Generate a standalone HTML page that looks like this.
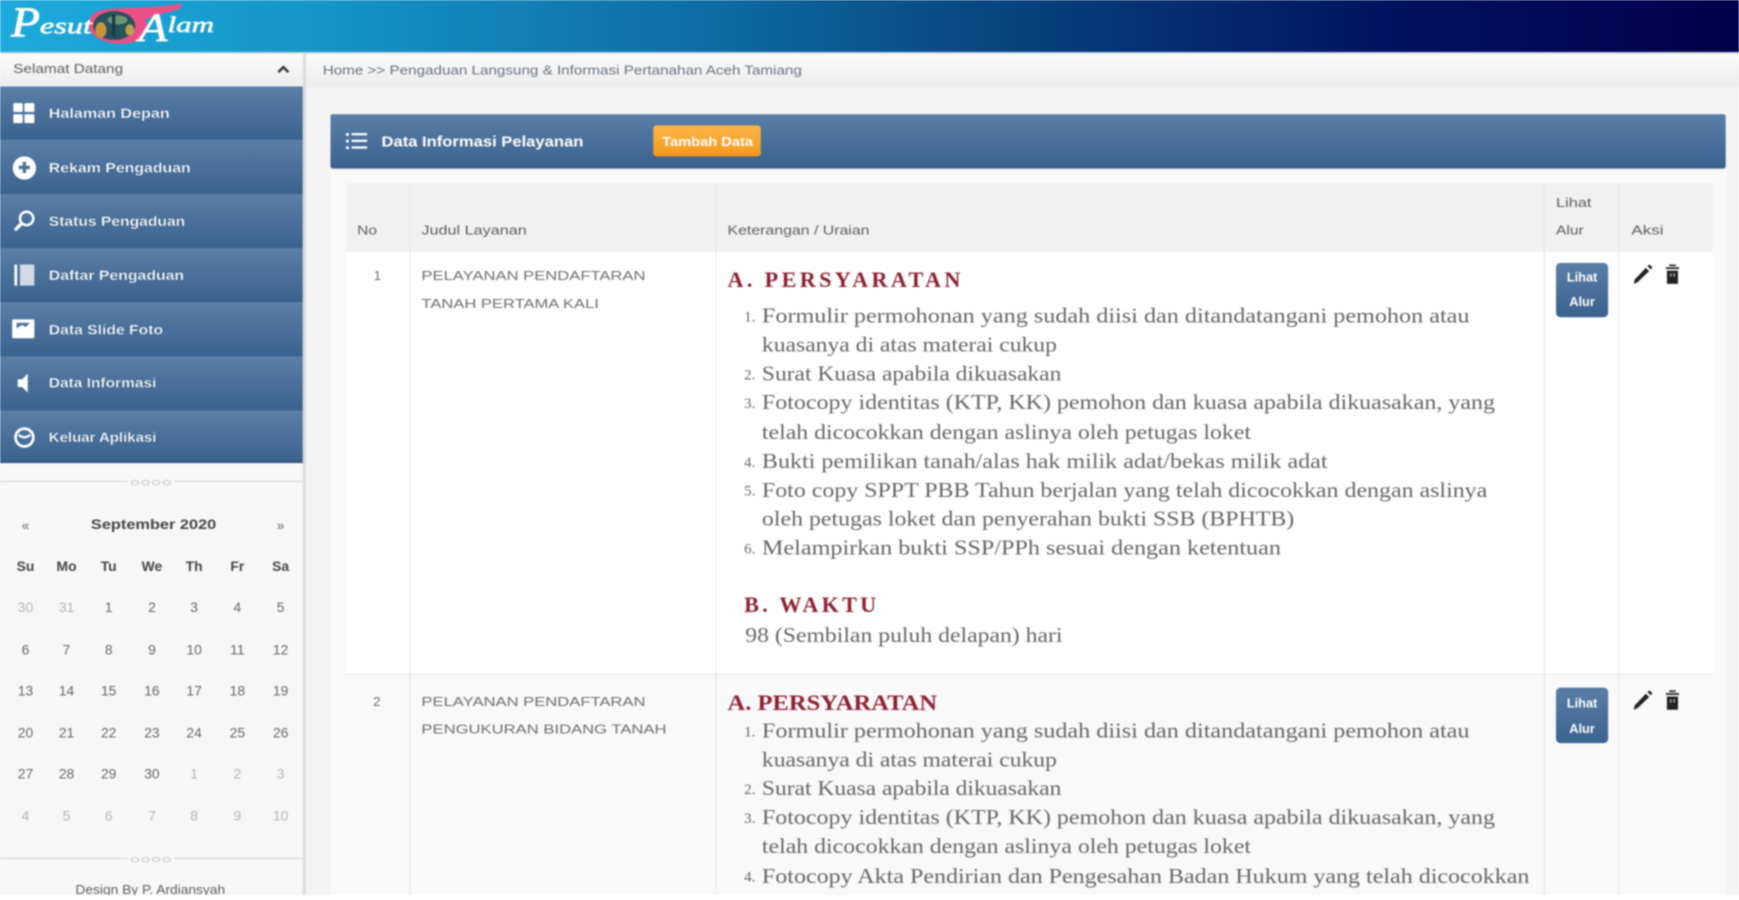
<!DOCTYPE html>
<html lang="id">
<head>
<meta charset="utf-8">
<title>Data Informasi Pelayanan</title>
<style>
html,body{margin:0;padding:0;width:1739px;height:900px;overflow:hidden;background:#fff}
svg{display:block;filter:blur(.85px)}
text{font-family:"Liberation Sans",sans-serif;white-space:pre}
.m{font-size:12.500px;font-weight:700;fill:#fff;stroke:#1d3f66;stroke-width:.2px}
.c{font-size:12.500px;fill:#666;text-anchor:middle}
.f{fill:#b5b5b5}
.d{font-weight:700;fill:#444}
.h{font-size:11.500px;fill:#5e5e5e}
.t{font-size:12px;fill:#6e6e6e}
.s{font-family:"Liberation Serif",serif;font-size:19px;fill:#666}
.n{font-family:"Liberation Serif",serif;font-size:13.500px;fill:#666}
.r{font-family:"Liberation Serif",serif;font-weight:700;font-size:20px;fill:#8d2230}
.b{font-size:11.500px;font-weight:700;fill:#fff;text-anchor:middle}
</style>
</head>
<body>
<svg xmlns="http://www.w3.org/2000/svg" width="1739" height="900" viewBox="0 0 1568 811.5" preserveAspectRatio="none">
<defs>
<linearGradient id="hd" x1="0" x2="1" y1="0" y2="0">
<stop offset="0" stop-color="#1cabdc"/><stop offset=".17" stop-color="#1597c9"/><stop offset=".4" stop-color="#0d6ea6"/><stop offset=".58" stop-color="#07437f"/><stop offset=".8" stop-color="#011261"/><stop offset="1" stop-color="#00004e"/>
</linearGradient>
<linearGradient id="mn" x1="0" x2="0" y1="0" y2="1"><stop offset="0" stop-color="#5a7ea6"/><stop offset="1" stop-color="#38628e"/></linearGradient>
<linearGradient id="br" x1="0" x2="0" y1="0" y2="1"><stop offset="0" stop-color="#fbfbfb"/><stop offset="1" stop-color="#ececec"/></linearGradient>
<linearGradient id="or" x1="0" x2="0" y1="0" y2="1"><stop offset="0" stop-color="#fbb645"/><stop offset="1" stop-color="#f7971c"/></linearGradient>
</defs>

<rect width="1568" height="812" fill="#f4f4f4"/>

<!-- top bar + logo -->
<rect width="1568" height="47" fill="url(#hd)"/>
<rect y="47" width="1568" height="1.500" fill="#c8d4de"/>
<path d="M92 9C110 6 140 8 164 3L162 8C150 12 138 14 131 18C137 28 130 37 116 39C100 41 86 36 81 27C78 18 83 11 92 9Z" fill="#ec4f86"/>
<ellipse cx="103" cy="23" rx="19" ry="13" fill="#26525c"/>
<ellipse cx="91" cy="27" rx="5" ry="7" fill="#c8953a"/>
<ellipse cx="106" cy="18" rx="9" ry="4" fill="#6f9472"/>
<ellipse cx="117" cy="27" rx="4" ry="5" fill="#b9a14a"/>
<rect x="101" y="13" width="3" height="20" fill="#1c3c48"/>
<text x="10" y="33" textLength="26" lengthAdjust="spacingAndGlyphs" style="font-family:'Liberation Serif',serif;font-style:italic;font-size:38px;fill:#fff;stroke:#fff;stroke-width:.8px">P</text>
<text x="36" y="30" textLength="47" lengthAdjust="spacingAndGlyphs" style="font-family:'Liberation Serif',serif;font-style:italic;font-size:21px;fill:#fff;stroke:#fff;stroke-width:.5px">esut</text>
<text x="125" y="37" textLength="26" lengthAdjust="spacingAndGlyphs" style="font-family:'Liberation Serif',serif;font-style:italic;font-size:36px;fill:#fff;stroke:#fff;stroke-width:.6px">A</text>
<text x="151" y="29" textLength="42" lengthAdjust="spacingAndGlyphs" style="font-family:'Liberation Serif',serif;font-style:italic;font-size:20px;fill:#fff;stroke:#fff;stroke-width:.5px">lam</text>

<!-- breadcrumb -->
<rect x="276" y="48.500" width="1292" height="30" fill="url(#br)"/>
<text class="h" x="291" y="67" textLength="432" lengthAdjust="spacingAndGlyphs" style="fill:#6a7480">Home &gt;&gt; Pengaduan Langsung &amp; Informasi Pertanahan Aceh Tamiang</text>

<!-- sidebar -->
<rect x="0" y="48.500" width="273" height="759" fill="#f7f7f7"/>
<rect x="273" y="48.500" width="3" height="759" fill="#dedede"/>
<rect x="0" y="48.500" width="273" height="30" fill="url(#br)"/>
<text class="h" x="12" y="66" textLength="99" lengthAdjust="spacingAndGlyphs">Selamat Datang</text>
<path d="M251 65l4.500-4.500l4.500 4.500" fill="none" stroke="#333" stroke-width="2.200"/>

<rect x="0" y="78" width="273" height="48.500" fill="url(#mn)"/>
<rect x="0" y="126.500" width="273" height="49" fill="url(#mn)"/>
<rect x="0" y="175.500" width="273" height="48.500" fill="url(#mn)"/>
<rect x="0" y="224" width="273" height="49" fill="url(#mn)"/>
<rect x="0" y="273" width="273" height="48.500" fill="url(#mn)"/>
<rect x="0" y="321.500" width="273" height="49" fill="url(#mn)"/>
<rect x="0" y="370.500" width="273" height="46.500" fill="url(#mn)"/>
<rect x="0" y="416" width="273" height="1.500" fill="#2d5480"/>

<text class="m" x="44" y="106.500" textLength="109" lengthAdjust="spacingAndGlyphs">Halaman Depan</text>
<text class="m" x="44" y="155.500" textLength="128" lengthAdjust="spacingAndGlyphs">Rekam Pengaduan</text>
<text class="m" x="44" y="204" textLength="123" lengthAdjust="spacingAndGlyphs">Status Pengaduan</text>
<text class="m" x="44" y="252.500" textLength="122" lengthAdjust="spacingAndGlyphs">Daftar Pengaduan</text>
<text class="m" x="44" y="301.500" textLength="103" lengthAdjust="spacingAndGlyphs">Data Slide Foto</text>
<text class="m" x="44" y="349.500" textLength="97" lengthAdjust="spacingAndGlyphs">Data Informasi</text>
<text class="m" x="44" y="398.500" textLength="97" lengthAdjust="spacingAndGlyphs">Keluar Aplikasi</text>

<!-- menu icons -->
<g fill="#fff">
<rect x="12" y="93" width="8.500" height="8" rx="1"/><rect x="22" y="93" width="9" height="8" rx="1"/>
<rect x="12" y="103" width="8.500" height="8" rx="1"/><rect x="22" y="103" width="9" height="8" rx="1"/>
<path fill-rule="evenodd" d="M22 141a10.500 10.500 0 1 0 .01 0ZM20.500 146h3v3.500h3.500v3h-3.500v3.500h-3v-3.500h-3.500v-3h3.500Z"/>
<rect x="13" y="238.500" width="2.500" height="19"/><rect x="18" y="238.500" width="13" height="19" opacity=".75"/>
<path fill-rule="evenodd" d="M12 288h18a1 1 0 0 1 1 1v15a1 1 0 0 1-1 1h-18a1 1 0 0 1-1-1v-15a1 1 0 0 1 1-1ZM15 291v5l5-3 3 2 4-4v0Z"/>
<path d="M16 342h4l5-5v17l-5-5h-4Z"/>
</g>
<circle cx="24" cy="197" r="6" fill="none" stroke="#fff" stroke-width="2.300"/>
<path d="M19.500 201.500L13.500 207.500" stroke="#fff" stroke-width="3"/>
<circle cx="22" cy="394.500" r="8" fill="none" stroke="#fff" stroke-width="2.500"/>
<path d="M17 392a6 5 0 0 0 10 0" fill="none" stroke="#fff" stroke-width="2"/>

<!-- divider 1 -->
<rect x="0" y="433.500" width="273" height="1" fill="#d6d6d6"/>
<rect x="115" y="428" width="42" height="12" fill="#f7f7f7"/>
<text x="136" y="438" text-anchor="middle" textLength="38" lengthAdjust="spacingAndGlyphs" style="font-size:10px;fill:#aaa">○○○○</text>

<!-- calendar -->
<text x="23" y="478" class="c">«</text>
<text x="253" y="478" class="c">»</text>
<text x="138.500" y="477" class="c" textLength="113" lengthAdjust="spacingAndGlyphs" style="font-weight:700;fill:#444">September 2020</text>
<g class="c">
<text class="c d" x="23" y="515">Su</text><text class="c d" x="60" y="515">Mo</text><text class="c d" x="98" y="515">Tu</text><text class="c d" x="137" y="515">We</text><text class="c d" x="175" y="515">Th</text><text class="c d" x="214" y="515">Fr</text><text class="c d" x="253" y="515">Sa</text>
<text class="c f" x="23" y="552">30</text><text class="c f" x="60" y="552">31</text><text class="c" x="98" y="552">1</text><text class="c" x="137" y="552">2</text><text class="c" x="175" y="552">3</text><text class="c" x="214" y="552">4</text><text class="c" x="253" y="552">5</text>
<text class="c" x="23" y="590">6</text><text class="c" x="60" y="590">7</text><text class="c" x="98" y="590">8</text><text class="c" x="137" y="590">9</text><text class="c" x="175" y="590">10</text><text class="c" x="214" y="590">11</text><text class="c" x="253" y="590">12</text>
<text class="c" x="23" y="627">13</text><text class="c" x="60" y="627">14</text><text class="c" x="98" y="627">15</text><text class="c" x="137" y="627">16</text><text class="c" x="175" y="627">17</text><text class="c" x="214" y="627">18</text><text class="c" x="253" y="627">19</text>
<text class="c" x="23" y="665">20</text><text class="c" x="60" y="665">21</text><text class="c" x="98" y="665">22</text><text class="c" x="137" y="665">23</text><text class="c" x="175" y="665">24</text><text class="c" x="214" y="665">25</text><text class="c" x="253" y="665">26</text>
<text class="c" x="23" y="702">27</text><text class="c" x="60" y="702">28</text><text class="c" x="98" y="702">29</text><text class="c" x="137" y="702">30</text><text class="c f" x="175" y="702">1</text><text class="c f" x="214" y="702">2</text><text class="c f" x="253" y="702">3</text>
<text class="c f" x="23" y="740">4</text><text class="c f" x="60" y="740">5</text><text class="c f" x="98" y="740">6</text><text class="c f" x="137" y="740">7</text><text class="c f" x="175" y="740">8</text><text class="c f" x="214" y="740">9</text><text class="c f" x="253" y="740">10</text>
</g>

<!-- divider 2 -->
<rect x="0" y="773.500" width="273" height="1" fill="#d6d6d6"/>
<rect x="115" y="768" width="42" height="12" fill="#f7f7f7"/>
<text x="136" y="778" text-anchor="middle" textLength="38" lengthAdjust="spacingAndGlyphs" style="font-size:10px;fill:#aaa">○○○○</text>
<text class="h" x="68" y="806" textLength="135" lengthAdjust="spacingAndGlyphs">Design By P. Ardiansyah</text>

<!-- panel -->
<rect x="298" y="152" width="1259" height="660" fill="#f9f9f9"/>
<rect x="298" y="103" width="1258" height="49" rx="2" fill="url(#mn)"/>
<g fill="#fff">
<rect x="312" y="120" width="2.500" height="2.500"/><rect x="312" y="126" width="2.500" height="2.500"/><rect x="312" y="132" width="2.500" height="2.500"/>
<rect x="317" y="120" width="14" height="2"/><rect x="317" y="126" width="14" height="2"/><rect x="317" y="132" width="14" height="2"/>
</g>
<text x="344" y="132" textLength="182" lengthAdjust="spacingAndGlyphs" style="font-size:13.500px;font-weight:700;fill:#fff">Data Informasi Pelayanan</text>
<rect x="589" y="113" width="97" height="28" rx="3" fill="url(#or)"/>
<text x="597" y="131.500" textLength="82" lengthAdjust="spacingAndGlyphs" style="font-size:12px;font-weight:700;fill:#fff">Tambah Data</text>

<!-- table -->
<rect x="312" y="165" width="1232" height="62" fill="#f1f1f1"/>
<rect x="312" y="227" width="1232" height="381" fill="#fff"/>
<rect x="312" y="608" width="1232" height="200" fill="#f9f9f9"/>
<rect x="312" y="607.500" width="1232" height="1" fill="#e8e8e8"/>
<g fill="#e6e6e6">
<rect x="369" y="165" width="1" height="643"/><rect x="645" y="165" width="1" height="643"/><rect x="1392" y="165" width="1" height="643"/><rect x="1459" y="165" width="1" height="643"/>
</g>

<text class="h" x="322" y="211.500" textLength="18" lengthAdjust="spacingAndGlyphs">No</text>
<text class="h" x="380" y="211.500" textLength="95" lengthAdjust="spacingAndGlyphs">Judul Layanan</text>
<text class="h" x="656" y="211.500" textLength="128" lengthAdjust="spacingAndGlyphs">Keterangan / Uraian</text>
<text class="h" x="1403" y="186.500" textLength="32" lengthAdjust="spacingAndGlyphs">Lihat</text>
<text class="h" x="1403" y="211.500" textLength="25" lengthAdjust="spacingAndGlyphs">Alur</text>
<text class="h" x="1471" y="211.500" textLength="29" lengthAdjust="spacingAndGlyphs">Aksi</text>

<!-- row 1 -->
<text class="t" x="337" y="252.500">1</text>
<text class="t" x="380" y="252.500" textLength="202" lengthAdjust="spacingAndGlyphs">PELAYANAN PENDAFTARAN</text>
<text class="t" x="380" y="277.500" textLength="160" lengthAdjust="spacingAndGlyphs">TANAH PERTAMA KALI</text>
<text class="r" x="656" y="259" textLength="210" lengthAdjust="spacing">A. PERSYARATAN</text>
<text class="n" x="671" y="290">1.</text><text class="s" x="687" y="291" textLength="638" lengthAdjust="spacingAndGlyphs">Formulir permohonan yang sudah diisi dan ditandatangani pemohon atau</text>
<text class="s" x="687" y="317" textLength="266" lengthAdjust="spacingAndGlyphs">kuasanya di atas materai cukup</text>
<text class="n" x="671" y="342">2.</text><text class="s" x="687" y="343" textLength="270" lengthAdjust="spacingAndGlyphs">Surat Kuasa apabila dikuasakan</text>
<text class="n" x="671" y="368">3.</text><text class="s" x="687" y="369" textLength="661" lengthAdjust="spacingAndGlyphs">Fotocopy identitas (KTP, KK) pemohon dan kuasa apabila dikuasakan, yang</text>
<text class="s" x="687" y="396" textLength="441" lengthAdjust="spacingAndGlyphs">telah dicocokkan dengan aslinya oleh petugas loket</text>
<text class="n" x="671" y="421">4.</text><text class="s" x="687" y="422" textLength="510" lengthAdjust="spacingAndGlyphs">Bukti pemilikan tanah/alas hak milik adat/bekas milik adat</text>
<text class="n" x="671" y="447">5.</text><text class="s" x="687" y="448" textLength="654" lengthAdjust="spacingAndGlyphs">Foto copy SPPT PBB Tahun berjalan yang telah dicocokkan dengan aslinya</text>
<text class="s" x="687" y="474" textLength="480" lengthAdjust="spacingAndGlyphs">oleh petugas loket dan penyerahan bukti SSB (BPHTB)</text>
<text class="n" x="671" y="499">6.</text><text class="s" x="687" y="500" textLength="468" lengthAdjust="spacingAndGlyphs">Melampirkan bukti SSP/PPh sesuai dengan ketentuan</text>
<text class="r" x="671" y="552" textLength="119" lengthAdjust="spacing">B. WAKTU</text>
<text class="s" x="672" y="579" textLength="286" lengthAdjust="spacingAndGlyphs">98 (Sembilan puluh delapan) hari</text>

<rect x="1403" y="237" width="47" height="49" rx="4" fill="url(#mn)"/>
<text class="b" x="1426.500" y="254">Lihat</text><text class="b" x="1426.500" y="276">Alur</text>
<path d="M1473 256l1-4l10-10.500l3 3l-10.500 10Z M1485.500 240l1.500-1.500l3 2.500l-1.500 2Z" fill="#222"/>
<path d="M1502 241h12v1.500h-12Z M1505 238.500h6v1.500h-6Z M1503 244h10v12h-10Z" fill="#222"/>
<path d="M1506.500 246.500v3M1509.500 246.500v3" stroke="#ddd" stroke-width="1"/>

<!-- row 2 -->
<text class="t" x="336.500" y="636.500">2</text>
<text class="t" x="380" y="636.500" textLength="202" lengthAdjust="spacingAndGlyphs">PELAYANAN PENDAFTARAN</text>
<text class="t" x="380" y="661.500" textLength="221" lengthAdjust="spacingAndGlyphs">PENGUKURAN BIDANG TANAH</text>
<text class="r" x="656" y="640" textLength="189" lengthAdjust="spacingAndGlyphs">A. PERSYARATAN</text>
<text class="n" x="671" y="664">1.</text><text class="s" x="687" y="665" textLength="638" lengthAdjust="spacingAndGlyphs">Formulir permohonan yang sudah diisi dan ditandatangani pemohon atau</text>
<text class="s" x="687" y="691" textLength="266" lengthAdjust="spacingAndGlyphs">kuasanya di atas materai cukup</text>
<text class="n" x="671" y="716">2.</text><text class="s" x="687" y="717" textLength="270" lengthAdjust="spacingAndGlyphs">Surat Kuasa apabila dikuasakan</text>
<text class="n" x="671" y="742">3.</text><text class="s" x="687" y="743" textLength="661" lengthAdjust="spacingAndGlyphs">Fotocopy identitas (KTP, KK) pemohon dan kuasa apabila dikuasakan, yang</text>
<text class="s" x="687" y="769" textLength="441" lengthAdjust="spacingAndGlyphs">telah dicocokkan dengan aslinya oleh petugas loket</text>
<text class="n" x="671" y="795">4.</text><text class="s" x="687" y="796" textLength="692" lengthAdjust="spacingAndGlyphs">Fotocopy Akta Pendirian dan Pengesahan Badan Hukum yang telah dicocokkan</text>

<rect x="1403" y="620" width="47" height="50" rx="4" fill="url(#mn)"/>
<text class="b" x="1426.500" y="638">Lihat</text><text class="b" x="1426.500" y="661">Alur</text>
<path d="M1473 640l1-4l10-10.500l3 3l-10.500 10Z M1485.500 624l1.500-1.500l3 2.500l-1.500 2Z" fill="#222"/>
<path d="M1502 625h12v1.500h-12Z M1505 622.500h6v1.500h-6Z M1503 628h10v12h-10Z" fill="#222"/>
<path d="M1506.500 630.500v3M1509.500 630.500v3" stroke="#ddd" stroke-width="1"/>

<rect x="0" y="807" width="1568" height="5" fill="#fff"/>
</svg>
</body>
</html>
